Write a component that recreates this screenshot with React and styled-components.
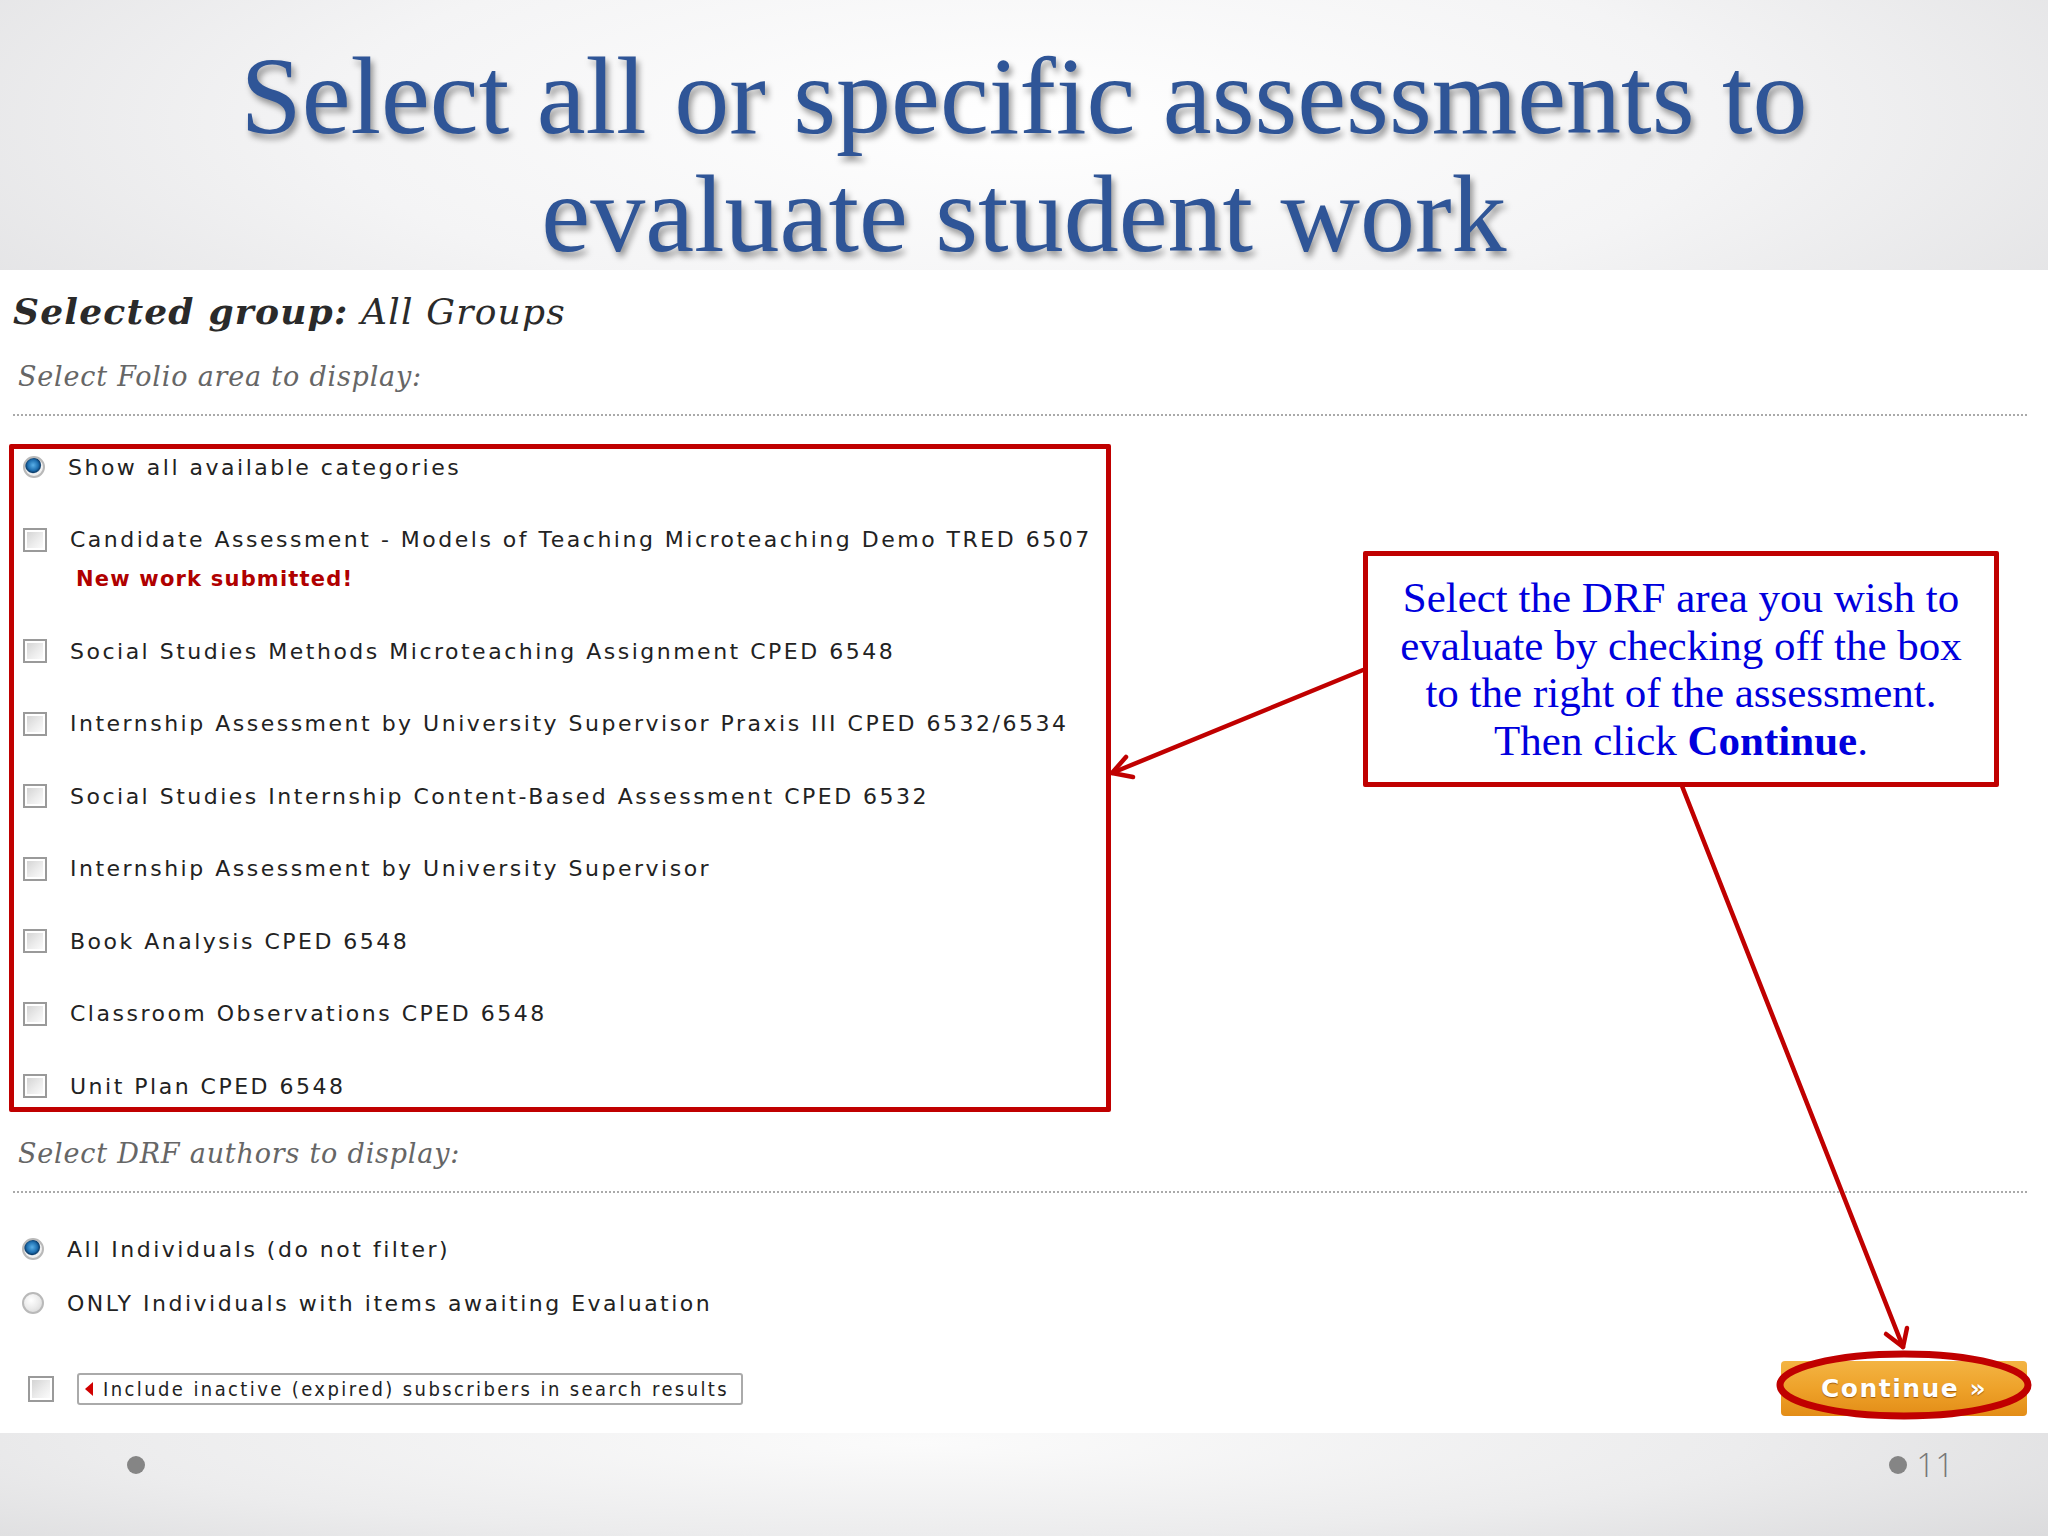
import React from "react";
import styled, { createGlobalStyle } from "styled-components";

const GlobalStyle = createGlobalStyle`
    *, *::before, *::after {
        box-sizing: border-box;
    }
    html, body {
        margin: 0;
        padding: 0;
        background: #fff;
        overflow: hidden;
    }
`;

const categories = [
    { label: "Show all available categories", radio: true, checked: true },
    { label: "Candidate Assessment - Models of Teaching Microteaching Demo TRED 6507", note: "New work submitted!" },
    { label: "Social Studies Methods Microteaching Assignment CPED 6548" },
    { label: "Internship Assessment by University Supervisor Praxis III CPED 6532/6534" },
    { label: "Social Studies Internship Content-Based Assessment CPED 6532" },
    { label: "Internship Assessment by University Supervisor" },
    { label: "Book Analysis CPED 6548" },
    { label: "Classroom Observations CPED 6548" },
    { label: "Unit Plan CPED 6548" },
];

function App() {
    return (
        <>
            <GlobalStyle />
            <Slide>
                <TitleBand>
                    <Title>
                        Select all or specific assessments to
                        <br />
                        evaluate student work
                    </Title>
                </TitleBand>

                <Content>
                    <GroupHeading>
                        <strong>Selected group:</strong> All Groups
                    </GroupHeading>
                    <SectionLabel>Select Folio area to display:</SectionLabel>
                    <Dotted />

                    <HighlightBox>
                        {categories.map((c) => (
                            <Option key={c.label}>
                                <OptionLine>
                                    {c.radio ? <Radio checked={c.checked} /> : <Checkbox />}
                                    <OptionText>{c.label}</OptionText>
                                </OptionLine>
                                {c.note && <NewWork>{c.note}</NewWork>}
                            </Option>
                        ))}
                    </HighlightBox>

                    <SectionLabel second>Select DRF authors to display:</SectionLabel>
                    <Dotted />

                    <AuthorList>
                        <OptionLine>
                            <Radio checked />
                            <OptionText>All Individuals (do not filter)</OptionText>
                        </OptionLine>
                        <OptionLine>
                            <Radio />
                            <OptionText>ONLY Individuals with items awaiting Evaluation</OptionText>
                        </OptionLine>
                    </AuthorList>

                    <BottomRow>
                        <InactiveToggle>
                            <Checkbox small />
                            <TagLabel>Include inactive (expired) subscribers in search results</TagLabel>
                        </InactiveToggle>
                        <ContinueButton>Continue »</ContinueButton>
                    </BottomRow>

                    <Callout>
                        Select the DRF area you wish to
                        <br />
                        evaluate by checking off the box
                        <br />
                        to the right of the assessment.
                        <br />
                        Then click <b>Continue</b>.
                    </Callout>
                </Content>

                <FooterBand>
                    <Bullet />
                    <PageNumber>
                        <Bullet />
                        11
                    </PageNumber>
                </FooterBand>

                <Annotations viewBox="0 0 2048 1536">
                    <g stroke="#c00000" strokeWidth="4.5" fill="none" strokeLinecap="round" strokeLinejoin="round">
                        <line x1="1363" y1="670" x2="1112" y2="773" />
                        <polyline points="1126,757 1112,773 1133,777" />
                        <line x1="1682" y1="786" x2="1903" y2="1347" />
                        <polyline points="1886,1334 1903,1347 1907,1328" />
                    </g>
                    <ellipse cx="1904" cy="1385" rx="124" ry="31" stroke="#c00000" strokeWidth="7" fill="none" />
                </Annotations>
            </Slide>
        </>
    );
}

export default App;

const Slide = styled.div`
    position: relative;
    width: 2048px;
    height: 1536px;
    display: flex;
    flex-direction: column;
    overflow: hidden;
`;

const TitleBand = styled.header`
    height: 270px;
    flex: none;
    padding-top: 40px;
    background: radial-gradient(ellipse 75% 160% at 50% 45%, #ffffff 0%, #f4f4f5 45%, #d9d9db 100%);
    display: flex;
    align-items: center;
    justify-content: center;
`;

const Title = styled.h1`
    margin: 0;
    font-family: "Liberation Serif", "DejaVu Serif", serif;
    font-weight: normal;
    font-size: 110px;
    line-height: 118px;
    text-align: center;
    color: #2f5597;
    text-shadow: 3px 5px 6px rgba(0, 0, 0, 0.4);
`;

const Content = styled.main`
    position: relative;
    flex: 1;
    background: #fff;
    padding: 14px 21px 0 13px;
    display: flex;
    flex-direction: column;
`;

const GroupHeading = styled.div`
    font-family: "DejaVu Serif", serif;
    font-style: italic;
    font-size: 36px;
    line-height: 54px;
    color: #2a2a2a;
    letter-spacing: 1.2px;

    strong {
        font-weight: bold;
    }
`;

const SectionLabel = styled.div`
    font-family: "DejaVu Serif", serif;
    font-style: italic;
    font-size: 27px;
    line-height: 40px;
    letter-spacing: 0.8px;
    margin: ${(p) => (p.second ? "22px" : "18px")} 0 0 5px;
    color: #666;
`;

const Dotted = styled.div`
    border-top: 2px dotted #aaa;
    margin-top: 17px;
`;

const HighlightBox = styled.section`
    margin: 28px 0 0 -4px;
    width: 1102px;
    border: 5px solid #c00000;
    border-radius: 2px;
    padding: 3px 0 6px 0;
    display: flex;
    flex-direction: column;
    gap: 42.5px;
`;

const Option = styled.div`
    display: flex;
    flex-direction: column;
`;

const OptionLine = styled.label`
    display: flex;
    align-items: center;
    height: 30px;
`;

const OptionText = styled.span`
    font-family: "DejaVu Sans", "Liberation Sans", sans-serif;
    font-size: 22px;
    letter-spacing: 2.5px;
    color: #222;
    margin-left: 23px;
    white-space: nowrap;
`;

const NewWork = styled.div`
    margin: 9px 0 0 62px;
    line-height: 30px;
    font-family: "DejaVu Sans", sans-serif;
    font-weight: bold;
    font-size: 21px;
    letter-spacing: 1.2px;
    color: #b00000;
`;

const Radio = styled.span`
    flex: none;
    width: 22px;
    height: 22px;
    margin-left: 9px;
    border-radius: 50%;
    border: 2px solid #b9b9b9;
    background: ${(p) =>
        p.checked
            ? "radial-gradient(circle at 45% 40%, #5ab0e8 0%, #1e6fb0 36%, #0c3f6e 50%, #f4f4f4 58%, #dcdcdc 100%)"
            : "radial-gradient(circle at 40% 35%, #ffffff 0%, #e9e9e9 55%, #cfcfcf 100%)"};
`;

const Checkbox = styled.span`
    flex: none;
    width: ${(p) => (p.small ? "26px" : "24px")};
    height: ${(p) => (p.small ? "26px" : "24px")};
    margin-left: 9px;
    border: 2px solid #9a9a9a;
    background: linear-gradient(135deg, #cfcfcf 0%, #ececec 55%, #ffffff 100%);
    box-shadow: inset 0 0 0 2px #fff;
`;

const AuthorList = styled.div`
    margin-top: 41px;
    display: flex;
    flex-direction: column;
    gap: 24px;
`;

const BottomRow = styled.div`
    margin-top: 43px;
    display: flex;
    align-items: center;
    justify-content: space-between;
`;

const InactiveToggle = styled.div`
    display: flex;
    align-items: center;
    gap: 23px;

    ${Checkbox} {
        margin-left: 15px;
    }
`;

const TagLabel = styled.span`
    position: relative;
    height: 32px;
    line-height: 28px;
    padding: 0 12px 0 24px;
    border: 2px solid #aaa;
    border-radius: 3px;
    font-family: "DejaVu Sans Condensed", "DejaVu Sans", sans-serif;
    font-size: 20px;
    letter-spacing: 2.4px;
    color: #222;

    &::before {
        content: "";
        position: absolute;
        left: 6px;
        top: 7px;
        border-right: 8px solid #d00000;
        border-top: 7px solid transparent;
        border-bottom: 7px solid transparent;
    }
`;

const ContinueButton = styled.button`
    width: 246px;
    height: 55px;
    border: 0;
    border-radius: 4px;
    background: linear-gradient(#f3b443 0%, #eea22a 50%, #e38d17 100%);
    font-family: "DejaVu Sans", sans-serif;
    font-weight: bold;
    font-size: 25px;
    letter-spacing: 1.5px;
    color: #fff;
    text-shadow: 0 1px 1px rgba(110, 50, 0, 0.6);
    cursor: pointer;
`;

const Callout = styled.aside`
    position: absolute;
    left: 1363px;
    top: 281px;
    width: 636px;
    height: 236px;
    border: 5px solid #c00000;
    border-radius: 2px;
    padding: 18px 0 0;
    font-family: "Liberation Serif", "DejaVu Serif", serif;
    font-size: 43px;
    line-height: 47.5px;
    text-align: center;
    white-space: nowrap;
    color: #0000dd;
    background: #fff;
`;

const FooterBand = styled.footer`
    height: 103px;
    flex: none;
    background: radial-gradient(ellipse 80% 180% at 45% 10%, #fbfbfb 0%, #ececed 50%, #d4d4d6 100%);
    display: flex;
    justify-content: space-between;
    align-items: flex-start;
    padding: 23px 94px 0 127px;
`;

const Bullet = styled.span`
    display: inline-block;
    width: 18px;
    height: 18px;
    border-radius: 50%;
    background: #858585;
`;

const PageNumber = styled.div`
    display: flex;
    align-items: center;
    gap: 9px;
    margin-top: -10px;
    font-family: "Open Sans", "DejaVu Sans", sans-serif;
    font-weight: 300;
    font-size: 33px;
    line-height: 38px;
    color: #777;
`;

const Annotations = styled.svg`
    position: absolute;
    inset: 0;
    width: 2048px;
    height: 1536px;
    pointer-events: none;
`;
